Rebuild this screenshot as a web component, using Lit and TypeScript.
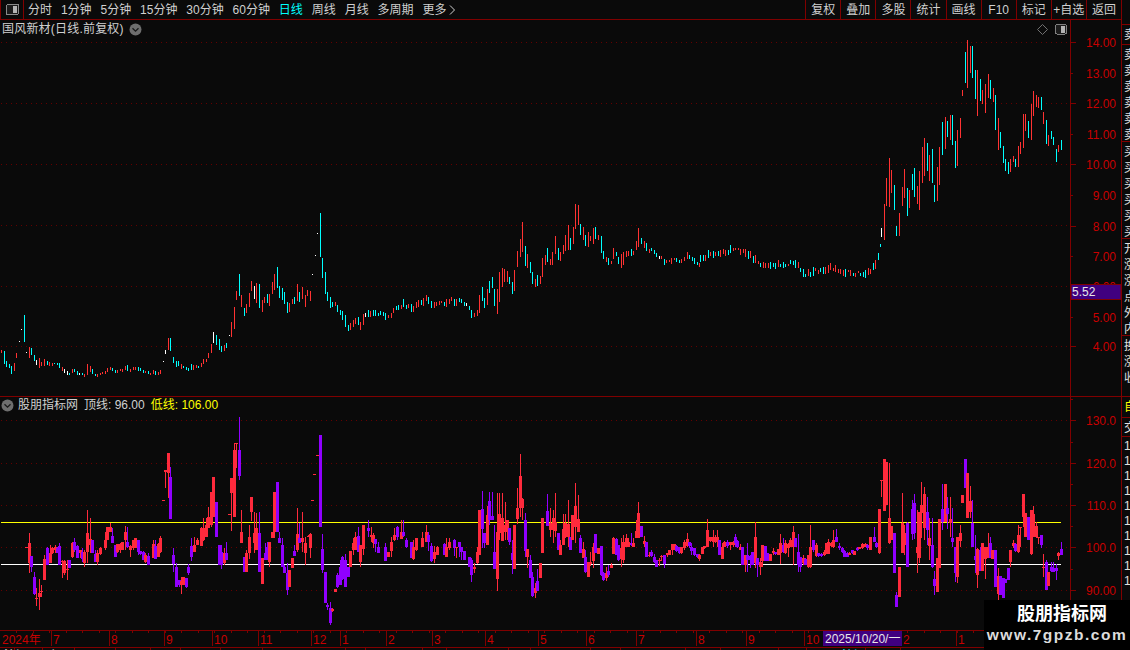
import { LitElement, html, svg, css } from "lit";
import { customElement } from "lit/decorators.js";

type PriceBar = { x: number; top: number; bot: number; c: string };
type Candle = { x: number; wt: number; bt: number; bb: number; wb: number; c: string };

function parsePrice(src: string, ox: number, oy: number): PriceBar[] {
  return src.split(";").map((t) => {
    const m = t.trim().match(/^(\d+),(\d+),(\d+)([RCW])$/)!;
    return { x: Math.round(ox + +m[1] / 3), top: Math.round(oy + +m[2] / 3), bot: Math.round(oy + +m[3] / 3), c: m[4] };
  });
}
function parseCandles(src: string, ox: number, oy: number): Candle[] {
  return src.split(";").map((t) => {
    const p = t.trim().split(",");
    const y = (i: number) => Math.round(oy + +p[i] / 3);
    return { x: Math.round(ox + +p[0] / 3), wt: y(1), bt: y(2), bb: y(3), wb: y(4), c: p[5] };
  });
}

const priceLeft = `4,450,458R;13,453,492C;19,483,500C;28,492,503C;34,498,522C;43,489,513R;49,459,474R;58,423,426W;64,387,390W;73,345,426C;79,456,459W;88,441,474R;94,444,465C;103,465,483C;109,480,495W;118,474,503R;124,486,498R;133,477,498R;142,483,495C;148,486,498R;157,489,498R;163,489,492C;172,489,495C;178,489,504C;187,501,513R;193,507,519W;202,513,525W;208,519,525C;217,507,519R;223,507,516C;232,513,525C;238,519,525W;247,519,525C;253,522,531R;262,492,525R;271,498,516R;277,507,522C;286,522,528C;292,522,531R;301,519,525R;307,516,522R;316,513,522R;322,504,516R;331,501,510R;337,504,513C;346,510,519C;352,510,519R;361,507,513R;367,507,516R;376,498,510R;382,495,513C;391,507,516R;400,501,510R;406,501,510R;415,501,513C;421,504,513C;430,510,519C;436,513,519R;445,513,522C;451,519,525R;460,510,522R;466,513,525C;475,516,525R;481,510,522R;490,483,486W;496,450,462W;505,414,450R;511,414,453C;520,471,489C;529,483,501C;535,483,498C;544,492,507R;550,498,504C;559,501,510C;565,504,513C;574,492,510C;580,495,510R;589,495,504R;595,498,504C;604,489,501R;610,477,492R;619,477,486R;625,459,474R;634,432,459R;640,396,429W;649,405,435C;658,417,450C;664,438,456C;673,435,453R;679,429,444C;688,405,408W;694,366,411R;703,321,387R;709,273,300R;718,222,288C;724,285,321R;733,324,348C;739,312,339R;748,279,321R;754,243,273R;763,258,297W;769,249,309R;778,252,324C;787,300,336R;793,291,309R;802,282,309C;808,282,318R;817,246,282R;823,222,270R;832,201,264C;838,258,294C;847,264,300C;853,276,312C;862,306,339C;868,309,336R;877,297,312R;883,291,312C;892,252,303R;898,276,306C;907,261,297R;916,285,321R;922,270,288R;931,273,303R;937,222,225W;946,165,168W;952,99,102W;961,39,171C;967,174,234C;976,216,282C;982,276,303C;991,291,324C;997,306,321C;1006,306,318R;1012,315,336C;1021,330,345C;1027,333,360C;1036,345,381C;1045,375,393C`;

const priceMid = `1,399,420R;10,390,410R;16,384,402R;25,381,405C;31,396,420R;40,372,405R;46,369,381W;55,360,381C;61,363,381R;70,360,378C;76,360,378C;85,369,378C;91,363,375C;100,366,378C;106,369,390C;115,375,384R;124,369,384R;130,354,369R;139,348,360C;145,345,360C;154,345,357R;160,327,351C;169,345,357C;175,342,354R;184,342,366C;190,348,366R;199,336,354R;205,330,351R;214,330,345C;220,324,348R;229,315,333R;235,321,342C;244,333,354C;253,336,354R;259,336,348R;268,333,345R;274,333,339R;283,336,348C;289,327,351R;298,327,342R;304,321,333R;313,327,348C;319,327,348R;328,324,336C;334,327,339C;343,336,348C;349,339,348W;358,348,360C;364,360,384C;373,369,381R;382,360,378R;388,315,369R;397,291,333C;403,324,354C;412,297,345R;418,273,309C;427,261,294C;433,297,348C;442,297,372R;448,246,336R;457,234,291R;463,237,276R;472,243,276R;478,261,282C;487,276,312C;493,240,303R;502,183,231R;511,147,201R;517,96,186R;526,168,228C;532,192,234R;541,216,249C;547,246,282C;556,267,291R;562,255,288C;571,258,282R;577,204,261R;586,195,225R;592,174,216C;601,207,225R;607,186,225R;616,138,192R;625,174,210C;631,186,213R;640,165,192R;646,135,183R;655,105,180R;661,144,180C;670,111,162R;676,42,117R;685,45,105R;691,102,135C;700,111,150R;706,135,168C;715,126,171R;721,138,153R;730,114,162R;736,111,147C;745,135,150R;754,138,189C;760,183,207C;769,201,216R;775,204,225C;784,213,222R;790,174,207R;799,186,198C;805,201,222C;814,192,234R;820,186,225R;829,183,201R;835,183,198R;844,177,198C;850,183,195R;859,153,180R;865,114,171R;874,144,162C;883,153,174R;889,159,183C;898,177,189R;904,174,183C;913,180,192C;919,189,201C;928,198,207W;934,198,207R;943,207,225C;949,210,219R;958,210,216R;964,204,222R;973,204,210R;979,204,216C;988,210,219C;994,207,219R;1003,201,213R;1012,186,207R;1018,195,207C;1027,201,213C;1033,204,222C;1042,216,225C;1048,219,231R`;

const priceRight = `94,595,620W;103,522,630R;109,445,528R;118,385,530R;124,420,488R;133,465,540C;139,588,618C;148,550,618R;157,472,528R;163,418,503R;172,475,557C;178,480,534R;187,432,480C;193,415,500C;202,468,522R;208,423,540R;217,350,460R;223,325,437R;232,340,423C;238,376,452R;247,358,458C;253,465,515C;262,411,513R;268,352,465R;277,276,375C;286,262,357R;292,273,320C;301,255,330R;307,255,345C;316,333,413C;322,300,408R;331,265,323R;337,180,198R;346,67,158C;352,30,173R;361,48,128R;367,48,145C;376,120,207C;382,120,258R;391,148,213C;397,180,222R;406,162,248R;415,132,205R;421,150,207C;430,174,216R;436,195,300C;445,264,360R;451,306,353C;460,348,400C;466,388,423C;475,396,432C;481,388,427R;490,378,396R;496,387,410C;505,348,410R;511,336,372R;520,252,353R;526,252,303R;535,273,323C;544,222,330R;550,183,258R;559,195,232R;565,201,234R;574,201,240C;580,246,282R;589,270,342C;595,315,348R;604,303,327C;610,321,345C;619,357,396C;625,345,366R;634,330,360C`;

const candlesLeft = `79,470,470,472,472,R;88,430,460,520,550,R;94,498,498,532,545,P;103,545,560,612,615,P;109,595,625,622,648,R;118,567,608,622,660,R;124,585,603,607,620,R;133,495,507,570,570,R;142,470,475,525,525,P;151,465,490,520,520,R;157,470,475,490,492,R;166,465,470,480,490,R;172,470,475,490,490,P;178,460,468,525,525,P;187,510,512,515,565,R;193,510,512,550,555,R;202,510,538,540,570,R;208,510,510,535,535,P;217,455,460,500,505,R;223,445,455,480,485,P;232,465,468,505,505,P;241,480,480,490,505,R;247,475,487,507,515,P;253,480,485,520,530,R;262,360,430,485,520,R;271,385,447,465,490,R;277,450,450,490,490,P;286,480,492,515,515,P;292,480,490,515,525,R;301,472,475,493,495,R;316,425,450,475,480,R;322,412,412,450,450,R;331,400,412,425,425,R;337,415,437,460,460,P;346,465,465,500,500,P;352,462,462,485,490,R;361,460,462,480,490,R;367,455,455,480,480,R;376,408,427,450,480,R;382,410,455,472,475,P;391,465,468,480,500,R;400,450,450,475,480,R;406,445,445,475,475,R;415,450,450,485,495,P;421,482,482,492,495,P;430,482,485,510,510,P;436,490,495,515,520,R;445,490,497,525,525,P;460,450,462,505,505,R;466,450,467,508,508,P;475,460,462,500,500,R;481,438,445,485,490,R;490,330,330,332,332,R;496,240,240,245,293,R;505,190,190,250,325,R;511,232,262,387,387,P;520,475,495,522,545,P;529,520,530,590,590,P;538,570,570,585,590,P;544,560,572,585,612,R;550,560,560,585,585,R;559,565,565,592,595,P;565,522,530,550,555,P;574,445,468,500,512,P;583,440,465,485,485,R;592,445,450,465,465,R;604,410,415,468,468,R;610,385,415,450,452,R;619,385,405,440,440,R;625,350,382,415,415,R;634,305,305,405,410,R;640,260,260,382,382,R;649,335,335,440,440,P;658,465,465,525,525,P;664,465,487,525,537,P;673,475,490,520,525,R;679,457,490,510,510,P;688,372,372,374,375,R;694,265,265,310,422,R;703,160,180,380,380,R;709,160,160,162,235,R;718,80,180,258,270,P;724,360,427,460,460,R;733,500,500,545,545,P;739,480,490,545,545,R;748,405,442,490,507,R;754,320,320,365,392,R;763,365,430,460,490,R;769,370,415,480,480,R;778,365,430,545,545,P;787,505,505,582,582,R;796,460,490,510,510,P;802,455,470,510,510,P;808,455,455,515,530,R;817,425,425,445,445,R;823,305,305,425,445,R;832,275,275,425,425,P;838,425,445,460,460,P;847,445,465,530,530,P;853,525,530,550,550,P;862,520,550,600,615,P;868,540,540,590,590,R;877,505,505,535,535,R;883,465,482,497,497,P;892,355,432,480,485,R;898,400,445,460,460,P;907,365,445,455,485,R;916,440,460,490,525,R;925,435,438,440,442,R;931,430,432,473,505,R;937,330,330,332,332,R;943,252,252,255,255,R;952,195,195,198,198,R;961,135,135,412,412,P;967,432,477,540,550,P;976,545,545,640,640,P;982,640,645,652,660,P;991,635,655,700,705,P;997,655,657,662,665,R;1006,597,597,607,607,R;1012,550,555,592,595,P;1021,510,532,585,585,P;1027,497,500,560,570,P;1036,495,530,590,590,P`;

const candlesMid = `4,375,375,415,415,P;10,350,375,418,418,P;16,342,360,438,438,P;25,380,380,412,412,P;31,332,332,380,380,R;40,295,310,330,345,R;46,275,290,330,330,R;55,262,288,335,335,P;61,315,315,365,382,R;70,255,255,328,345,R;85,240,265,273,290,P;94,262,285,290,305,R;100,280,285,310,325,R;106,298,298,312,335,P;115,305,322,338,340,P;136,310,322,362,362,P;145,335,335,350,350,R;154,290,305,333,350,R;163,265,285,300,302,R;172,258,262,290,300,P;184,240,275,298,298,R;190,240,275,287,290,P;199,295,300,320,325,P;214,305,305,355,355,P;220,300,320,358,360,R;229,295,295,330,332,R;247,275,295,320,322,R;259,255,277,305,305,R;265,275,285,305,332,P;274,310,318,363,365,P;283,318,335,358,370,R;292,318,320,345,345,R;313,310,312,345,345,P;319,295,320,352,352,R;328,293,305,325,330,R;343,298,300,325,348,P;349,320,320,325,355,R;358,305,305,320,350,P;364,320,320,335,360,P;373,332,332,360,360,P;388,350,350,380,380,P;394,355,360,405,425,P;403,368,380,388,400,R;412,320,335,370,372,R;418,210,210,345,345,R;427,153,207,268,325,P;433,280,280,310,325,P;442,198,225,315,315,R;448,157,183,240,255,P;457,157,228,240,240,P;463,255,335,388,388,P;472,158,275,417,452,R;478,160,222,280,300,R;487,160,235,302,302,R;496,185,255,275,300,R;502,240,240,270,300,R;508,265,265,305,315,P;517,300,340,360,402,P;523,255,255,388,388,R;532,145,205,238,252,R;541,42,108,205,230,R;547,175,178,205,240,R;556,220,240,333,350,P;562,327,327,350,385,R;571,345,360,415,415,P;577,395,410,468,470,P;586,430,445,460,475,R;592,388,423,452,452,P;601,370,370,415,415,R;607,235,235,338,338,R;622,162,213,258,258,P;631,205,250,270,290,R;640,210,235,270,308,R;646,158,245,272,290,R;655,280,280,330,330,P;661,300,315,345,345,R;670,222,268,315,315,R;676,222,250,290,295,R;685,180,252,290,320,R;691,290,290,330,330,P;697,225,225,300,300,R;706,130,198,262,310,R;715,165,238,275,275,R;721,285,293,338,340,P;730,305,328,355,355,R;736,330,350,395,400,P;745,365,365,412,412,R;751,335,365,372,378,R;760,310,320,362,385,R;766,282,282,340,340,P;775,325,325,342,342,R;784,318,318,405,408,P;790,395,398,420,422,P;799,380,400,415,422,R;805,375,393,405,410,P;814,370,375,385,385,R;820,292,295,342,342,R;829,295,298,345,345,P;835,315,315,360,362,P;844,295,325,358,380,R;850,285,305,360,370,R;859,282,295,320,322,R;865,295,305,322,322,R;874,278,308,315,318,P;880,295,310,320,320,R;889,240,272,295,295,R;895,185,220,295,295,R;904,258,258,290,290,P;913,288,303,312,320,R;919,305,305,350,350,P;928,335,345,348,352,R;934,330,335,347,350,P;943,342,352,365,370,P;949,360,360,380,380,P;958,355,360,363,378,R;964,345,347,350,362,R;973,345,345,372,385,P;982,340,340,346,350,R;988,330,330,346,346,R;997,312,312,330,345,R;1003,312,312,328,330,R;1009,315,318,333,335,P;1018,322,322,340,342,P;1024,320,322,340,342,R;1033,300,305,325,330,R;1042,280,298,318,320,R;1048,305,305,318,325,P`;

const candlesRight = `4,310,322,333,345,P;13,325,325,345,348,P;22,342,342,352,355,P;28,342,345,358,362,R;37,322,322,342,342,R;43,318,318,325,328,R;52,238,270,322,322,R;61,290,292,302,305,R;70,270,290,305,320,R;76,285,290,305,310,R;82,270,292,300,320,R;88,300,300,345,345,P;97,310,320,358,358,R;103,302,305,320,322,R;112,300,305,318,325,P;121,305,305,316,330,R;130,303,305,315,320,R;136,282,292,310,320,P;142,300,302,320,325,P;151,313,320,330,330,R;157,320,322,375,375,P;166,345,345,375,395,R;172,310,345,360,395,P;181,345,347,360,385,P;187,335,337,375,375,P;196,245,292,370,385,R;202,355,355,375,410,P;211,355,365,380,405,R;217,315,315,362,380,R;226,318,318,362,362,P;232,338,338,362,362,P;241,342,342,362,362,R;250,325,333,340,345,R;256,335,335,342,345,P;265,328,328,345,345,R;271,282,310,340,372,R;280,295,315,335,338,P;286,300,310,340,342,R;295,310,312,325,350,R;301,295,300,320,322,R;310,258,275,320,375,R;316,295,295,320,320,P;325,282,335,375,395,P;331,350,350,380,395,P;340,345,355,370,375,R;346,355,358,375,375,P;355,345,345,380,385,R;361,255,320,380,383,R;370,300,300,330,335,P;379,310,315,348,350,R;385,338,340,348,352,P;394,340,342,348,350,P;403,330,335,345,348,R;409,310,310,340,342,R;415,298,305,342,342,R;424,305,308,318,320,R;430,270,300,320,325,R;439,268,292,305,305,P;446,310,318,325,330,P;455,322,325,335,338,P;461,330,332,350,350,P;470,335,338,350,350,P;476,335,338,345,345,R;485,330,330,340,342,P;491,332,332,345,345,R;500,322,325,330,332,P;506,320,322,326,328,R;515,310,312,325,328,R;524,310,312,320,322,R;530,312,315,325,330,P;539,290,290,330,330,R;553,262,290,305,305,P;559,305,310,320,325,P;568,207,207,340,342,R;574,120,120,122,172,R;583,57,57,212,212,R;589,66,66,195,195,R;598,68,235,310,312,R;604,258,258,300,300,R;613,280,280,400,400,P;619,455,465,502,502,P;628,382,382,472,472,R;637,160,250,340,340,R;643,255,280,315,345,R;652,245,250,380,380,P;667,180,207,282,300,P;673,163,190,280,298,P;682,210,320,340,398,R;688,215,215,355,370,R;694,125,195,220,295,R;703,140,163,265,300,R;712,170,215,270,315,P;718,235,295,318,360,R;727,235,315,380,385,P;733,392,417,437,465,P;742,355,355,455,455,R;748,238,238,385,385,R;757,132,207,247,270,P;766,132,132,245,245,R;772,170,205,222,268,P;781,172,237,250,290,R;787,205,293,307,320,P;796,320,320,400,425,P;802,290,290,410,428,R;811,255,280,302,320,R;817,165,165,188,188,R;826,57,57,143,143,P;832,100,100,233,233,R;841,138,183,215,235,R;847,180,250,320,320,P;856,285,348,360,400,P;862,325,327,405,445,R;871,322,330,392,392,P;877,310,310,392,392,R;886,322,322,357,417,R;895,278,322,355,355,R;901,292,310,355,355,P;907,330,330,357,357,R;916,330,330,442,442,P;925,385,407,463,480,R;931,408,408,465,465,P;940,415,415,473,473,P;946,418,418,430,430,P;955,385,385,420,420,P;961,330,330,365,380,R;970,300,310,318,325,R;976,310,312,332,335,P;985,255,285,335,340,R;991,260,260,262,320,R;1000,162,162,232,260,R;1006,220,220,290,290,R;1015,232,232,300,300,P;1024,210,210,342,345,R;1030,197,222,292,292,R;1039,245,258,290,295,R;1045,290,290,292,312,R;1054,285,285,315,325,P;1060,343,380,383,410,R;1069,360,365,450,450,P;1075,395,397,437,437,R;1084,365,382,393,397,P;1090,365,385,395,395,P;1099,372,385,393,420,P;1105,335,340,347,360,R;1114,305,328,345,345,P`;

function interp(pts: number[][], x: number): number {
  for (let i = 1; i < pts.length; i++) {
    if (x <= pts[i][0]) {
      const [a, b] = pts[i - 1];
      const [c, d] = pts[i];
      return b + ((d - b) * (x - a)) / (c - a);
    }
  }
  return pts[pts.length - 1][1];
}

function generatedPrice(): PriceBar[] {
  const env = [[700, 258], [715, 254], [735, 249], [750, 256], [760, 264], [775, 265], [795, 263], [805, 274], [815, 271], [830, 268], [850, 273], [860, 274], [870, 271], [877, 263], [881, 240]];
  let s = 7;
  const rnd = () => ((s = (s * 16807) % 2147483647) % 1000) / 1000;
  const out: PriceBar[] = [];
  for (let i = 0; i * 2.5 + 700 < 881; i++) {
    const x = Math.round(700 + i * 2.5);
    const y = interp(env, x) + (rnd() - 0.5) * 4;
    const h = 2 + rnd() * 7;
    out.push({ x, top: Math.round(y - h / 2), bot: Math.round(y + h / 2), c: rnd() > 0.5 ? "R" : "C" });
  }
  return out;
}

const priceBars: PriceBar[] = [
  ...parsePrice(priceLeft, 0, 200),
  ...parsePrice(priceMid, 350, 190),
  ...generatedPrice(),
  ...parsePrice(priceRight, 850, 30),
];
const candles: Candle[] = [
  ...parseCandles(candlesLeft, 0, 390),
  ...parseCandles(candlesMid, 340, 440),
  ...parseCandles(candlesRight, 690, 440),
];

function pricePath(c: string): string {
  return priceBars
    .filter((b) => b.c === c)
    .map((b) => `M${b.x} ${b.top}h1v${Math.max(1, b.bot - b.top)}h-1z`)
    .join("");
}
function candlePath(b: Candle): string {
  const body = Math.max(1, b.bb - b.bt);
  return `M${b.x} ${b.wt}h1v${Math.max(1, b.wb - b.wt)}h-1zM${b.x - 1} ${b.bt}h3v${body}h-3z`;
}

const priceLabels: [string, number][] = [
  ["14.00", 42], ["13.00", 73], ["12.00", 103], ["11.00", 134], ["10.00", 164],
  ["9.00", 195], ["8.00", 226], ["7.00", 256], ["6.00", 286], ["5.00", 317], ["4.00", 346],
];
const priceGrid = [42, 103, 164, 225, 286, 346];
const indLabels: [string, number][] = [
  ["130.0", 420], ["120.0", 463], ["110.0", 505], ["100.0", 547], ["90.00", 590],
];
const months: [string, number][] = [
  ["7", 52], ["8", 110], ["9", 165], ["10", 213], ["11", 259], ["12", 312], ["1", 341], ["2", 387], ["3", 433],
  ["4", 486], ["5", 539], ["6", 587], ["7", 637], ["8", 697], ["9", 747], ["10", 805], ["2", 902], ["1", 957],
];
const minorTicks = Array.from({ length: 62 }, (_, i) => 16 + i * 16.5);

const bottomCuts = [14, 42, 74, 115, 150, 180, 220, 262, 345, 365, 422, 446, 508, 530, 590, 620, 685, 720, 778, 806, 865, 900, 985];

const leftTabs = ["分时", "1分钟", "5分钟", "15分钟", "30分钟", "60分钟"];
const midTabs = ["周线", "月线", "多周期"];
const rightBtns = ["复权", "叠加", "多股", "统计", "画线", "F10", "标记", "+自选", "返回"];

const sideRows: { h: number; chars: string[]; cls?: string }[] = [
  { h: 25, chars: [] },
  { h: 20, chars: ["卖"] },
  { h: 97, chars: ["卖", "卖", "卖", "卖", "卖", "卖"] },
  { h: 97, chars: ["买", "买", "买", "买", "买", "买"] },
  { h: 97, chars: ["开", "涨", "涨", "点", "外", "内"] },
  { h: 61, chars: ["换", "涨", "收"] },
  { h: 21, chars: ["自"], cls: "yel" },
  { h: 19, chars: ["交"] },
  { h: 213, chars: Array(10).fill("1"), cls: "nums" },
];

const gridLine = (y: number) => svg`<line class="grid" x1="1" x2="1070" y1=${y + 0.5} y2=${y + 0.5}></line>`;

@customElement("app-root")
export class AppRoot extends LitElement {
  static styles = css`
    :host {
      display: block;
      position: relative;
      width: 1130px;
      height: 650px;
      overflow: hidden;
      background: #0a0a0a;
      color: #d0d0d0;
      font: 12px/1 "Liberation Sans", "Noto Sans CJK SC", sans-serif;
    }
    .frame { display: grid; grid-template-columns: 1122px 8px; height: 650px; }
    .left { display: flex; flex-direction: column; border-right: 1px solid #800000; box-sizing: border-box; height: 650px; }
    .toolbar { display: flex; height: 19px; border-bottom: 1px solid #800000; flex: none; }
    .panelbtn { width: 22px; border-left: 1px solid #800000; border-right: 1px solid #800000; display: flex; align-items: center; justify-content: center; box-sizing: content-box; margin-right: 4px; }
    .tabs { display: flex; align-items: center; gap: 8.9px; flex: 1; white-space: nowrap; }
    .tabs .on { color: #00ffff; }
    .more { display: flex; align-items: center; gap: 3px; }
    .btns { display: flex; }
    .btn { width: 34.1px; border-left: 1px solid #800000; display: flex; align-items: center; justify-content: center; white-space: nowrap; }
    .panel { display: flex; flex: none; position: relative; }
    .price { height: 376px; border-bottom: 1px solid #800000; }
    .ind { height: 233px; border-bottom: 1px solid #800000; }
    .plot { width: 1070px; border-right: 1px solid #800000; flex: none; display: block; position: relative; }
    .plot svg { display: block; }
    .axis { display: block; width: 50px; flex: none; }
    svg .grid { stroke: #640000; stroke-width: 1; stroke-dasharray: 1 4; }
    svg .tick { stroke: #800000; stroke-width: 1; }
    svg text { font: 12px "Liberation Sans", "Noto Sans CJK SC", sans-serif; fill: #c80000; }
    svg text.white { fill: #e8e8e8; }
    svg text.cy { fill: #00ffff; }
    .pr { fill: #ff3232; }
    .pc { fill: #00ffff; }
    .pw { fill: #ffffff; }
    .R { fill: #ff2a3c; }
    .P { fill: #9000ff; }
    .title { position: absolute; left: 2px; top: 3px; display: flex; align-items: center; gap: 5px; white-space: nowrap; line-height: 13px; }
    .title .wide { letter-spacing: 0.2px; }
    .title.t2 { gap: 4px; top: 2px; left: 1px; }
    .yel { color: #ffff00; }
    .gap { margin-left: 2px; }
    .corner { position: absolute; right: 3px; top: 4px; display: flex; align-items: center; gap: 7px; }
    .time { display: block; flex: none; height: 16px; border-bottom: 1px solid #800000; }
    .strip { flex: 1; position: relative; overflow: hidden; }
    .strip svg { display: block; }
    .side { display: flex; flex-direction: column; overflow: hidden; }
    .row { border-bottom: 1px solid #800000; box-sizing: border-box; overflow: hidden; padding-left: 2px; flex: none; padding-top: 2px; }
    .row span { display: block; width: 14px; line-height: 16px; color: #e0e0e0; }
    .row.yel span { color: #ffff00; }
    .row.nums span { line-height: 15px; }
    .mark { position: absolute; right: 0; bottom: 0; width: 146px; height: 50px; background: #000; display: flex; flex-direction: column; align-items: center; }
    .mark .a { font: bold 18px/22px "Noto Sans CJK SC", sans-serif; color: #fff; margin-top: 1px; padding-left: 10px; }
    .mark .b { font: bold 15.5px/18px "Liberation Sans", sans-serif; color: #dcdcdc; letter-spacing: 1.5px; margin-top: 3px; }
  `;

  private circleIcon() {
    return html`<svg width="13" height="13" viewBox="0 0 13 13">
      <circle cx="6.5" cy="6.5" r="6" fill="#6e6e6e"></circle>
      <path d="M3.5 5.2 6.5 8.2 9.5 5.2" fill="none" stroke="#1a1a1a" stroke-width="1.3"></path>
    </svg>`;
  }

  private panelIcon(w: number, h: number) {
    return html`<svg width=${w} height=${h} viewBox="0 0 13 11" shape-rendering="crispEdges">
      <rect x="0.5" y="0.5" width="12" height="10" rx="1.5" fill="#1c1c1c" stroke="#8a8a8a"></rect>
      <rect x="7" y="2" width="4" height="7" fill="#b4b4b4"></rect>
    </svg>`;
  }

  render() {
    return html`
      <div class="frame">
        <div class="left">
          <div class="toolbar">
            <div class="panelbtn">${this.panelIcon(13, 11)}</div>
            <div class="tabs">
              ${leftTabs.map((t) => html`<span>${t}</span>`)}
              <span class="on">日线</span>
              ${midTabs.map((t) => html`<span>${t}</span>`)}
              <span class="more">更多
                <svg width="7" height="10" viewBox="0 0 7 10"><path d="M1 0.5 5.5 5 1 9.5" fill="none" stroke="#d0d0d0"></path></svg>
              </span>
            </div>
            <div class="btns">${rightBtns.map((t) => html`<div class="btn">${t}</div>`)}</div>
          </div>

          <div class="panel price">
            <div class="plot">
              <svg width="1070" height="376" viewBox="0 20 1070 376" shape-rendering="crispEdges">
                ${priceGrid.map(gridLine)}
                <path class="pr" d=${pricePath("R")}></path>
                <path class="pc" d=${pricePath("C")}></path>
                <path class="pw" d=${pricePath("W")}></path>
              </svg>
              <div class="title"><span class="wide">国风新材(日线.前复权)</span>${this.circleIcon()}</div>
              <div class="corner">
                <svg width="11" height="11" viewBox="0 0 11 11"><path d="M5.5 .5 10.5 5.5 5.5 10.5 .5 5.5Z" fill="none" stroke="#707070"></path></svg>
                ${this.panelIcon(12, 11)}
              </div>
            </div>
            <svg class="axis" width="50" height="376" viewBox="1071 20 50 376">
              ${priceLabels.map(([t, y]) => {
                const major = priceGrid.includes(y) || y === 226;
                return svg`<line class="tick" x1="1071" x2=${major ? 1076 : 1073} y1=${y + 0.5} y2=${y + 0.5} shape-rendering="crispEdges"></line>
                  <text x="1116" y=${y + 5} text-anchor="end">${t}</text>`;
              })}
              <rect x="1071" y="284.5" width="50" height="15" fill="#400080" stroke="#800000"></rect>
              <text class="white" x="1072" y="296">5.52</text>
            </svg>
          </div>

          <div class="panel ind">
            <div class="plot">
              <svg width="1070" height="233" viewBox="0 397 1070 233" shape-rendering="crispEdges">
                ${indLabels.map(([, y]) => gridLine(y))}
                <rect x="1" y="522" width="1060" height="1" fill="#ffff00"></rect>
                <rect x="1" y="564" width="1060" height="1" fill="#ffffff"></rect>
                ${candles.map((b) => svg`<path class=${b.c} d=${candlePath(b)}></path>`)}
              </svg>
              <div class="title t2">
                ${this.circleIcon()}
                <span>股朋指标网</span>
                <span class="gap">顶线: 96.00</span>
                <span class="yel gap">低线: 106.00</span>
              </div>
            </div>
            <svg class="axis" width="50" height="233" viewBox="1071 397 50 233">
              ${indLabels.map(([t, y]) => svg`
                <line class="tick" x1="1071" x2="1076" y1=${y + 0.5} y2=${y + 0.5} shape-rendering="crispEdges"></line>
                <line class="tick" x1="1071" x2="1073" y1=${y - 20.5} y2=${y - 20.5} shape-rendering="crispEdges"></line>
                <text x="1116" y=${y + 5} text-anchor="end">${t}</text>`)}
              <line class="tick" x1="1071" x2="1073" y1="610.5" y2="610.5" shape-rendering="crispEdges"></line>
            </svg>
          </div>

          <svg class="time" width="1121" height="16" viewBox="0 631 1121 16">
            ${minorTicks.map((x) => svg`<line class="tick" x1=${Math.round(x) + 0.5} x2=${Math.round(x) + 0.5} y1="631" y2="633" shape-rendering="crispEdges"></line>`)}
            <text x="2" y="644">2024年</text>
            ${months.map(([t, x]) => svg`
              <line class="tick" x1=${x - 0.5} x2=${x - 0.5} y1="631" y2="646" shape-rendering="crispEdges"></line>
              <text x=${x + 1} y="644">${t}</text>`)}
            <rect x="823" y="631" width="79" height="15" fill="#400080"></rect>
            <text class="white" x="825" y="643">2025/10/20/一</text>
            <line class="tick" x1="1070.5" x2="1070.5" y1="631" y2="646" shape-rendering="crispEdges"></line>
          </svg>

          <div class="strip">
            <svg width="1121" height="3" viewBox="0 647 1121 3">
              ${bottomCuts.map((x) => svg`<line class="tick" x1=${x + 0.5} x2=${x + 0.5} y1="647" y2="650" shape-rendering="crispEdges"></line>`)}
              <text class="white" x="4" y="659">沪深</text>
              <text class="white" x="48" y="659">主</text>
              <text class="cy" x="842" y="659">沪深</text>
            </svg>
          </div>
        </div>

        <div class="side">
          ${sideRows.map(
            (r) => html`<div class="row ${r.cls ?? ""}" style="height:${r.h}px">${r.chars.map((c) => html`<span>${c}</span>`)}</div>`
          )}
        </div>
      </div>
      <div class="mark">
        <div class="a">股朋指标网</div>
        <div class="b">www.7gpzb.com</div>
      </div>
    `;
  }
}
